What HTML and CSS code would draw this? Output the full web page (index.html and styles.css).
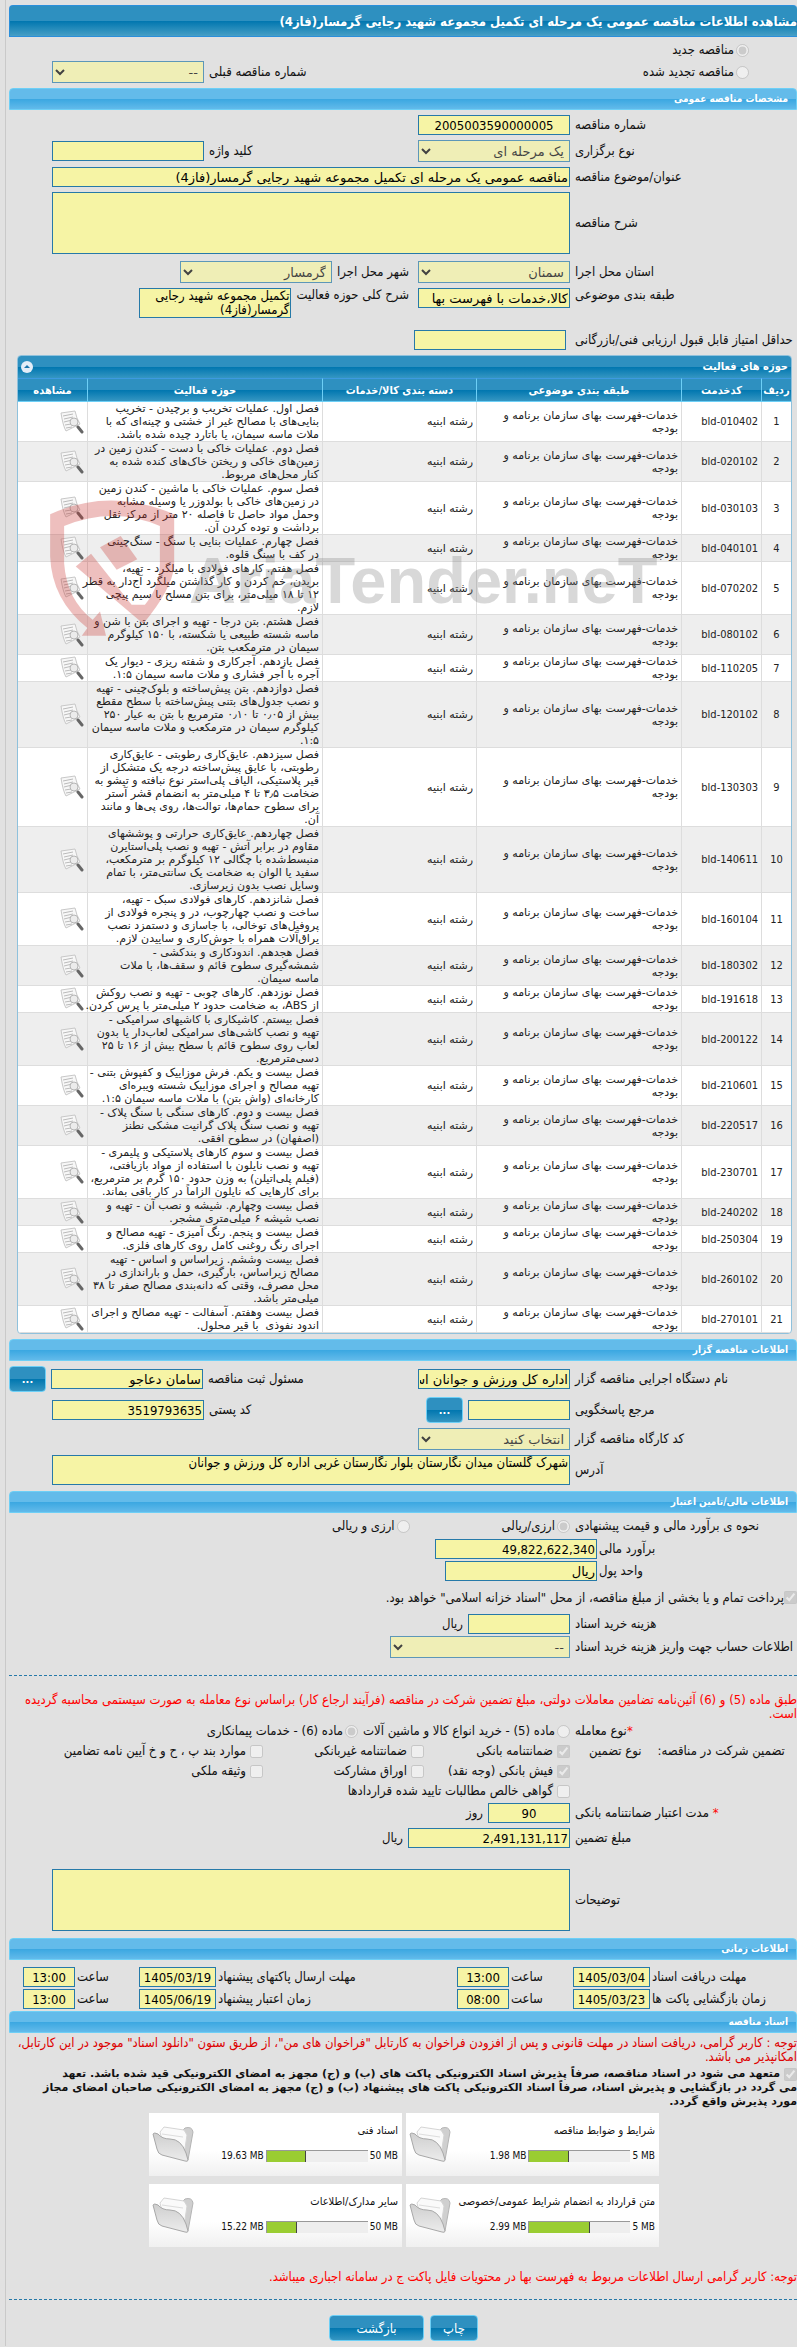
FILE: index.html
```html
<!DOCTYPE html>
<html lang="fa" dir="rtl">
<head>
    <meta charset="UTF-8">
    <meta name="viewport" content="width=device-width, initial-scale=1">
    <title>مشاهده اطلاعات مناقصه عمومی</title>
    <link rel="stylesheet" href="styles.css">
</head>
<body>
    <!-- Shared icons -->
    <svg class="sprite" aria-hidden="true">
        <defs>
            <linearGradient id="folder-face" x1="0" y1="0" x2="0" y2="1">
                <stop offset="0" stop-color="#cfcfcf"/>
                <stop offset="1" stop-color="#ececec"/>
            </linearGradient>
        </defs>
        <symbol id="icon-view" viewBox="0 0 24 24">
            <path d="M1 3 L15 1 L17 8 L20 14 L6 21 Q3 16 1 3 Z" fill="#f7f7f7" stroke="#c8c8c8"/>
            <path d="M3 6 L13 4 M4 9 L13 7 M4 12 L12 10 M5 15 L11 14 M6 18 L12 17" stroke="#bbb" fill="none"/>
            <circle cx="14" cy="12" r="4" fill="#ececec" stroke="#b5b5b5"/>
            <path d="M18 17 L22 22" stroke="#666" stroke-width="3" stroke-linecap="round"/>
        </symbol>
        <symbol id="icon-folder" viewBox="0 0 42 38">
            <path d="M28 8 L33 3 Q40 1 41 7 L36 35 L30 30 Z" fill="#cfcfcf" stroke="#b5b5b5"/>
            <path d="M8 7 L12 2 L32 5 L35 10 L32 30 L12 24 Z" fill="#fafafa" stroke="#d5d5d5"/>
            <path d="M10 9 L31 12" stroke="#ddd"/>
            <path d="M1 9 Q2 7 6 9 Q10 14 18 14 Q29 14 34 28 L36 35 Q36 37 33 36 L10 30 Q6 29 5 24 Z" fill="url(#folder-face)" stroke="#a8a8a8"/>
        </symbol>
    </svg>

    <main class="page">
        <h1 class="title-bar">مشاهده اطلاعات مناقصه عمومی یک مرحله ای تکمیل مجموعه شهید رجایی گرمسار(فاز4)</h1>

        <form>
            <div class="kind">
                <label class="kind-option"><input type="radio" name="kind" checked disabled>مناقصه جدید</label>
                <div class="row">
                    <label class="kind-option"><input type="radio" name="kind" disabled>مناقصه تجدید شده</label>
                    <div class="pair at-end">
                        <label for="prev">شماره مناقصه قبلی</label>
                        <select id="prev" disabled><option>--</option></select>
                    </div>
                </div>
            </div>

            <h2 class="section-bar">مشخصات مناقصه عمومی</h2>
            <div class="rows first">
                <div class="row">
                    <label class="caption" for="number">شماره مناقصه</label>
                    <input class="num center" id="number" type="text" value="2005003590000005" readonly>
                </div>
                <div class="row">
                    <label class="caption" for="type">نوع برگزاری</label>
                    <select id="type" disabled><option>یک مرحله ای</option></select>
                    <div class="pair at-end">
                        <label for="keyword">کلید واژه</label>
                        <input id="keyword" type="text" readonly>
                    </div>
                </div>
                <div class="row">
                    <label class="caption" for="subject">عنوان/موضوع مناقصه</label>
                    <input class="wide" id="subject" type="text" value="مناقصه عمومی یک مرحله ای تکمیل مجموعه شهید رجایی گرمسار(فاز4)" readonly>
                </div>
                <div class="row">
                    <label class="caption" for="desc">شرح مناقصه</label>
                    <textarea class="wide tall" id="desc" readonly></textarea>
                </div>
                <div class="row place">
                    <label class="caption" for="province">استان محل اجرا</label>
                    <select id="province" disabled><option>سمنان</option></select>
                    <div class="pair">
                        <label for="city">شهر محل اجرا</label>
                        <select id="city" disabled><option>گرمسار</option></select>
                    </div>
                </div>
                <div class="row top">
                    <label class="caption" for="category">طبقه بندی موضوعی</label>
                    <input id="category" type="text" value="کالا،خدمات با فهرست بها" readonly>
                    <div class="pair">
                        <label for="scope">شرح کلی حوزه فعالیت</label>
                        <textarea id="scope" readonly>تکمیل مجموعه شهید رجایی گرمسار(فاز4)</textarea>
                    </div>
                </div>
                <div class="row score">
                    <label class="caption" for="score">حداقل امتیاز قابل قبول ارزیابی فنی/بازرگانی</label>
                    <input id="score" type="text" readonly>
                </div>
            </div>

            <section class="grid-box">
                <div class="grid-title">
                    <h2>حوزه های فعالیت</h2>
                    <button class="toggle" type="button" aria-label="جمع کردن">
                        <svg viewBox="0 0 12 12"><path d="M3 7 L6 4 L9 7 Z"/></svg>
                    </button>
                </div>
                <table>
                    <colgroup>
                        <col class="col-index"><col class="col-code"><col class="col-category">
                        <col class="col-group"><col class="col-scope"><col class="col-view">
                    </colgroup>
                    <thead>
                        <tr>
                            <th>ردیف</th>
                            <th>کدخدمت</th>
                            <th>طبقه بندی موضوعی</th>
                            <th>دسته بندی کالا/خدمات</th>
                            <th>حوزه فعالیت</th>
                            <th>مشاهده</th>
                        </tr>
                    </thead>
                    <tbody id="activities"></tbody>
                </table>
                <div class="watermark" aria-hidden="true">
                    <svg viewBox="0 0 375 412">
                        <path d="M0 43 Q180 -40 373 43 V200 Q365 270 280 372 L77 200 L123 162 L245 315 L285 315 Q330 260 330 190 V78 Q190 18 42 78 V190 Q50 300 128 360 L150 335 L168 408 H95 L112 385 Q5 300 0 170 Z"/>
                        <path d="M150 142 L212 108 L262 178 L200 210 Z"/>
                    </svg>
                    <span>AriaTender.neT</span>
                </div>
            </section>

            <h2 class="section-bar">اطلاعات مناقصه گزار</h2>
            <div class="rows">
                <div class="row">
                    <label class="caption" for="org">نام دستگاه اجرایی مناقصه گزار</label>
                    <input id="org" type="text" value="اداره کل ورزش و جوانان استان سمنان" readonly>
                    <div class="pair at-edge">
                        <label for="registrar">مسئول ثبت مناقصه</label>
                        <input id="registrar" type="text" value="سامان دعاجو" readonly>
                        <button class="btn dots" type="button">...</button>
                    </div>
                </div>
                <div class="row">
                    <label class="caption" for="contact">مرجع پاسخگویی</label>
                    <input class="short" id="contact" type="text" readonly>
                    <button class="btn dots" type="button">...</button>
                    <div class="pair at-end">
                        <label for="postal">کد پستی</label>
                        <input class="num" id="postal" type="text" value="3519793635" readonly>
                    </div>
                </div>
                <div class="row">
                    <label class="caption" for="workshop">کد کارگاه مناقصه گزار</label>
                    <select id="workshop" disabled><option>انتخاب کنید</option></select>
                </div>
                <div class="row">
                    <label class="caption" for="address">آدرس</label>
                    <textarea class="wide" id="address" readonly>شهرک گلستان میدان نگارستان بلوار نگارستان غربی اداره کل ورزش و جوانان</textarea>
                </div>
            </div>

            <h2 class="section-bar">اطلاعات مالی/تامین اعتبار</h2>
            <div class="finance">
                <div class="row line">
                    <span class="caption">نحوه ی برآورد مالی و قیمت پیشنهادی</span>
                    <label class="choice"><input type="radio" name="currency" checked disabled>ارزی/ریالی</label>
                    <label class="choice far"><input type="radio" name="currency" disabled>ارزی و ریالی</label>
                </div>
                <div class="row money">
                    <label class="caption" for="estimate">برآورد مالی</label>
                    <input class="num amount" id="estimate" type="text" value="49,822,622,340" readonly>
                </div>
                <div class="row money">
                    <label class="caption" for="unit">واحد پول</label>
                    <input id="unit" type="text" value="ریال" readonly>
                </div>
                <label class="check-line"><input type="checkbox" checked disabled>پرداخت تمام و یا بخشی از مبلغ مناقصه، از محل "اسناد خزانه اسلامی" خواهد بود.</label>
                <div class="row">
                    <label class="caption" for="cost">هزینه خرید اسناد</label>
                    <input class="short" id="cost" type="text" readonly>
                    <span>ریال</span>
                </div>
                <div class="row">
                    <label class="caption" for="account">اطلاعات حساب جهت واریز هزینه خرید اسناد</label>
                    <select class="account" id="account" disabled><option>--</option></select>
                </div>
            </div>

            <div class="guarantee">
                <p class="notice">طبق ماده (5) و (6) آئین‌نامه تضامین معاملات دولتی، مبلغ تضمین شرکت در مناقصه (فرآیند ارجاع کار) براساس نوع معامله به صورت سیستمی محاسبه گردیده<br>است.</p>
                <div class="row line">
                    <span class="caption"><span class="star">*</span>نوع معامله</span>
                    <label class="choice"><input type="radio" name="deal" disabled>ماده (5) - خرید انواع کالا و ماشین آلات</label>
                    <label class="choice"><input type="radio" name="deal" checked disabled>ماده (6) - خدمات پیمانکاری</label>
                </div>
                <div class="row top">
                    <div class="caption kinds-caption">
                        <span>تضمین شرکت در مناقصه:</span>
                        <span>نوع تضمین</span>
                    </div>
                    <div class="kinds">
                        <label><input type="checkbox" checked disabled>ضمانتنامه بانکی</label>
                        <label><input type="checkbox" disabled>ضمانتنامه غیربانکی</label>
                        <label><input type="checkbox" disabled>موارد بند پ ، ح و خ آیین نامه تضامین</label>
                        <label><input type="checkbox" checked disabled>فیش بانکی (وجه نقد)</label>
                        <label><input type="checkbox" disabled>اوراق مشارکت</label>
                        <label><input type="checkbox" disabled>وثیقه ملکی</label>
                        <label class="full"><input type="checkbox" disabled>گواهی خالص مطالبات تایید شده قراردادها</label>
                    </div>
                </div>
                <div class="rows">
                    <div class="row">
                        <label class="caption" for="days"><span class="star">*</span> مدت اعتبار ضمانتنامه بانکی</label>
                        <input class="num days center" id="days" type="text" value="90" readonly>
                        <span>روز</span>
                    </div>
                    <div class="row">
                        <label class="caption" for="deposit">مبلغ تضمین</label>
                        <input class="num amount" id="deposit" type="text" value="2,491,131,117" readonly>
                        <span>ریال</span>
                    </div>
                    <div class="row remarks">
                        <label class="caption" for="remarks">توضیحات</label>
                        <textarea class="wide tall" id="remarks" readonly></textarea>
                    </div>
                </div>
            </div>

            <h2 class="section-bar">اطلاعات زمانی</h2>
            <div class="times">
                <label for="d1">مهلت دریافت اسناد</label>
                <input class="num" id="d1" type="text" value="1405/03/04" readonly>
                <label for="t1">ساعت</label>
                <input class="num" id="t1" type="text" value="13:00" readonly>
                <label for="d2">مهلت ارسال پاکتهای پیشنهاد</label>
                <input class="num" id="d2" type="text" value="1405/03/19" readonly>
                <label for="t2">ساعت</label>
                <input class="num" id="t2" type="text" value="13:00" readonly>
                <label for="d3">زمان بازگشایی پاکت ها</label>
                <input class="num" id="d3" type="text" value="1405/03/23" readonly>
                <label for="t3">ساعت</label>
                <input class="num" id="t3" type="text" value="08:00" readonly>
                <label for="d4">زمان اعتبار پیشنهاد</label>
                <input class="num" id="d4" type="text" value="1405/06/19" readonly>
                <label for="t4">ساعت</label>
                <input class="num" id="t4" type="text" value="13:00" readonly>
            </div>

            <h2 class="section-bar">اسناد مناقصه</h2>
            <p class="notice dark">توجه : کاربر گرامی، دریافت اسناد در مهلت قانونی و پس از افزودن فراخوان به کارتابل "فراخوان های من"، از طریق ستون "دانلود اسناد" موجود در این کارتابل،<br>امکانپذیر می باشد.</p>
            <label class="pledge"><input type="checkbox" checked disabled> متعهد می شود در اسناد مناقصه، صرفاً پذیرش اسناد الکترونیکی پاکت های (ب) و (ج) مجهز به امضای الکترونیکی قید شده باشد. تعهد<br>می گردد در بازگشایی و پذیرش اسناد، صرفاً اسناد الکترونیکی پاکت های پیشنهاد (ب) و (ج) مجهز به امضای الکترونیکی صاحبان امضای مجاز<br>مورد پذیرش واقع گردد.</label>

            <div class="cards" id="cards"></div>

            <p class="notice last">توجه: کاربر گرامی ارسال اطلاعات مربوط به فهرست بها در محتویات فایل پاکت ج در سامانه اجباری میباشد.</p>
            <div class="actions">
                <button class="btn" type="button">چاپ</button>
                <button class="btn back" type="button">بازگشت</button>
            </div>
        </form>
    </main>

    <script>
        const activities = [
            ['bld-010402', 'فصل اول. عملیات تخریب و برچیدن - تخریب|بنایی‌های با مصالح غیر از خشتی و چینه‌ای که با|ملات ماسه سیمان، یا باتارد چیده شده باشد.'],
            ['bld-020102', 'فصل دوم. عملیات خاکی با دست - کندن زمین در|زمین‌های خاکی و ریختن خاک‌های کنده شده به|کنار محل‌های مربوط.'],
            ['bld-030103', 'فصل سوم. عملیات خاکی با ماشین - کندن زمین|در زمین‌های خاکی با بولدوزر یا وسیله مشابه|وحمل مواد حاصل تا فاصله ۲۰ متر از مرکز ثقل|برداشت و توده کردن آن.'],
            ['bld-040101', 'فصل چهارم. عملیات بنایی با سنگ - سنگ‌چینی|در کف با سنگ قلوه.'],
            ['bld-070202', 'فصل هفتم. کارهای فولادی با میلگرد - تهیه،|بریدن، خم کردن و کار گذاشتن میلگرد آج‌دار به قطر|۱۲ تا ۱۸ میلی‌متر، برای بتن مسلح با سیم پیچی|لازم.'],
            ['bld-080102', 'فصل هشتم. بتن درجا - تهیه و اجرای بتن با شن و|ماسه شسته طبیعی یا شکسته، با ۱۵۰ کیلوگرم|سیمان در مترمکعب بتن.'],
            ['bld-110205', 'فصل یازدهم. آجرکاری و شفته ریزی - دیوار یک|آجره با آجر فشاری و ملات ماسه سیمان ۱:۵.'],
            ['bld-120102', 'فصل دوازدهم. بتن پیش‌ساخته و بلوک‌چینی - تهیه|و نصب جدول‌های بتنی پیش‌ساخته با سطح مقطع|بیش از ۰٫۰۵ تا ۰٫۱۰ مترمربع با بتن به عیار ۲۵۰|کیلوگرم سیمان در مترمکعب و ملات ماسه سیمان|۱:۵.'],
            ['bld-130303', 'فصل سیزدهم. عایق‌کاری رطوبتی - عایق‌کاری|رطوبتی، با عایق پیش‌ساخته درجه یک متشکل از|قیر پلاستیکی، الیاف پلی‌استر نوع نبافته و تیشو به|ضخامت ۳٫۵ تا ۴ میلی‌متر به انضمام قشر آستر|برای سطوح حمام‌ها، توالت‌ها، روی پی‌ها و مانند|آن.'],
            ['bld-140611', 'فصل چهاردهم. عایق‌کاری حرارتی و پوششهای|مقاوم در برابر آتش - تهیه و نصب پلی‌استایرن|منبسط‌شده با چگالی ۱۲ کیلوگرم بر مترمکعب،|سفید یا الوان به ضخامت یک سانتی‌متر، با تمام|وسایل نصب بدون زیرسازی.'],
            ['bld-160104', 'فصل شانزدهم. کارهای فولادی سبک - تهیه،|ساخت و نصب چهارچوب، در و پنجره فولادی از|پروفیل‌های توخالی، با جاسازی و دستمزد نصب|یراق‌آلات همراه با جوش‌کاری و ساییدن لازم.'],
            ['bld-180302', 'فصل هجدهم. اندودکاری و بندکشی -|شمشه‌گیری سطوح قائم و سقف‌ها، با ملات|ماسه سیمان.'],
            ['bld-191618', 'فصل نوزدهم. کارهای چوبی - تهیه و نصب روکش|از ABS، به ضخامت حدود ۲ میلی‌متر با پرس کردن.'],
            ['bld-200122', 'فصل بیستم. کاشیکاری با کاشیهای سرامیکی -|تهیه و نصب کاشی‌های سرامیکی لعاب‌دار یا بدون|لعاب روی سطوح قائم با سطح بیش از ۱۶ تا ۲۵|دسی‌مترمربع.'],
            ['bld-210601', 'فصل بیست و یکم. فرش موزاییک و کفپوش بتنی -|تهیه مصالح و اجرای موزاییک شسته ویبره‌ای|کارخانه‌ای (واش بتن) با ملات ماسه سیمان ۱:۵.'],
            ['bld-220517', 'فصل بیست و دوم. کارهای سنگی با سنگ پلاک -|تهیه و نصب سنگ پلاک گرانیت مشکی نطنز|(اصفهان) در سطوح افقی.'],
            ['bld-230701', 'فصل بیست و سوم کارهای پلاستیکی و پلیمری -|تهیه و نصب نایلون با استفاده از مواد بازیافتی،|(فیلم پلی‌اتیلن) به وزن حدود ۱۵۰ گرم بر مترمربع،|برای کارهایی که نایلون الزاماً در کار باقی بماند.'],
            ['bld-240202', 'فصل بیست وچهارم. شیشه و نصب آن - تهیه و|نصب شیشه ۶ میلی‌متری مشجر.'],
            ['bld-250304', 'فصل بیست و پنجم. رنگ آمیزی - تهیه مصالح و|اجرای رنگ روغنی کامل روی کارهای فلزی.'],
            ['bld-260102', 'فصل بیست وششم. زیراساس و اساس - تهیه|مصالح زیراساس، بارگیری، حمل و باراندازی در|محل مصرف، وقتی که دانه‌بندی مصالح صفر تا ۳۸|میلی‌متر باشد.'],
            ['bld-270101', 'فصل بیست وهفتم. آسفالت - تهیه مصالح و اجرای|اندود نفوذی &nbsp;با قیر محلول.']
        ];

        const files = [
            { title: 'شرایط و ضوابط مناقصه', used: 1.98, limit: 5 },
            { title: 'اسناد فنی', used: 19.63, limit: 50 },
            { title: 'متن قرارداد به انضمام شرایط عمومی/خصوصی', used: 2.99, limit: 5 },
            { title: 'سایر مدارک/اطلاعات', used: 15.22, limit: 50 }
        ];

        document.getElementById('activities').innerHTML = activities.map((item, i) => `
            <tr>
                <td class="index">${i + 1}</td>
                <td><bdi>${item[0]}</bdi></td>
                <td>خدمات-فهرست بهای سازمان برنامه و<br>بودجه</td>
                <td>رشته ابنیه</td>
                <td>${item[1].split('|').join('<br>')}</td>
                <td><a href="#" aria-label="مشاهده"><svg class="view"><use href="#icon-view"/></svg></a></td>
            </tr>`).join('');

        document.getElementById('cards').innerHTML = files.map(file => `
            <div class="card">
                <div class="card-text">
                    <div>${file.title}</div>
                    <div class="usage">
                        <bdi>${file.limit} MB</bdi>
                        <div class="meter"><div class="meter-fill" style="width: ${file.used / file.limit * 100}%"></div></div>
                        <bdi>${file.used} MB</bdi>
                    </div>
                </div>
                <svg class="folder"><use href="#icon-folder"/></svg>
            </div>`).join('');
    </script>
</body>
</html>
```
FILE: styles.css
```css
* {
    box-sizing: border-box;
}

body {
    margin: 0;
    background: #e1e1e1;
    color: #111;
    font-family: Tahoma, "DejaVu Sans Condensed", "DejaVu Sans", sans-serif;
    font-size: 13px;
    line-height: 14px;
    overflow-x: hidden;
}

h1, h2, p {
    margin: 0;
}

.sprite {
    position: absolute;
    width: 0;
    height: 0;
}

.page {
    margin-left: 5px;
    padding: 5px 0 5px 3px;
    border-left: 1px solid #c9c9c9;
}

/* Bars */
.title-bar {
    height: 32px;
    line-height: 32px;
    border: 1px solid #2b8fdb;
    border-right: 0;
    border-radius: 4px 4px 0 0;
    background: linear-gradient(#2e90c0 50%, #0076af 50%, #479fc6);
    color: #fff;
    font-size: 13px;
    white-space: nowrap;
}

.section-bar {
    height: 22px;
    line-height: 20px;
    padding-right: 8px;
    border: 1px solid #6dcff6;
    border-radius: 4px 4px 0 0;
    background: linear-gradient(#63bbea 50%, #3aa7e1 50%, #62baea);
    color: #fff;
    font-size: 10px;
}

/* Controls */
input, select, textarea, button {
    font-family: inherit;
    margin: 0;
}

input[type="text"], select, textarea {
    width: 152px;
    height: 20px;
    padding: 0 1px;
    border: 1px solid #2679a8;
    border-radius: 0;
    background-color: #f6f4a5;
    color: #000;
    font-family: Tahoma, "DejaVu Sans", sans-serif;
    font-size: 13px;
    flex: none;
}

input.num[type="text"], textarea {
    font-family: Tahoma, "DejaVu Sans Condensed", sans-serif;
}

select {
    height: 22px;
    opacity: 0.7;
}

select:disabled {
    color: #000;
}

textarea {
    display: block;
    height: 30px;
    line-height: 14px;
    resize: none;
    overflow: hidden;
}

input[type="radio"], input[type="checkbox"] {
    width: 13px;
    height: 13px;
    flex: none;
}

input.wide[type="text"], textarea.wide {
    flex: 1;
    margin-left: 43px;
}

textarea.tall {
    height: 62px;
}

input.short[type="text"] {
    width: 102px;
}

input.amount[type="text"] {
    width: 162px;
}

input.days[type="text"] {
    width: 82px;
}

select.account {
    width: 180px;
}

.center {
    text-align: center;
}

.btn {
    height: 26px;
    padding: 0;
    border: 1px solid #6dcff6;
    border-radius: 4px;
    background: linear-gradient(#2e90c0 50%, #0076af 50%, #3596c2);
    color: #fff;
    font-size: 13px;
    width: 48px;
}

.btn.dots {
    width: 37px;
    font-size: 11px;
    font-weight: bold;
}

.btn.back {
    width: 95px;
}

/* Form rows */
.rows {
    display: flex;
    flex-direction: column;
    gap: 5px;
    padding: 5px 0 6px;
}

.rows.first {
    padding-bottom: 5px;
}

.row {
    display: flex;
    align-items: center;
    gap: 5px;
    white-space: nowrap;
}

.row.top {
    align-items: flex-start;
}

.caption {
    width: 222px;
    flex: none;
    text-align: left;
}

.pair {
    display: flex;
    align-items: center;
    gap: 5px;
    margin-right: 4px;
}

.row.top .pair {
    align-items: flex-start;
}

.pair.at-end {
    margin-right: auto;
    margin-left: 43px;
}

.pair.at-edge {
    margin-right: auto;
}

.kind {
    display: flex;
    flex-direction: column;
    padding: 2px 48px 5px 0;
}

.kind-option {
    display: flex;
    align-items: center;
    gap: 2px;
    height: 22px;
}

.place {
    margin-top: 2px;
}

.score {
    margin-top: 7px;
}

.score input {
    margin-right: 4px;
}

/* Activity table */
.grid-box {
    position: relative;
    margin: 0 5px 5px 8px;
    border: 1px solid #8fc1dc;
    border-radius: 4px;
    background: #fff;
    overflow: hidden;
}

.grid-title {
    display: flex;
    align-items: center;
    justify-content: space-between;
    height: 22px;
    padding: 0 3px;
    background: linear-gradient(#2e90c0 50%, #0076af 50%, #3596c2);
    color: #fff;
}

.grid-title h2 {
    font-size: 11px;
}

.toggle {
    width: 12px;
    height: 12px;
    padding: 0;
    border: 0;
    border-radius: 50%;
    background: #e3edf8;
}

.toggle svg {
    display: block;
    fill: #1a74ab;
}

table {
    width: 100%;
    table-layout: fixed;
    border-collapse: separate;
    border-spacing: 0;
    font-size: 11px;
    line-height: 13px;
    color: #222;
    white-space: nowrap;
}

.col-index { width: 30px; }
.col-code { width: 80px; }
.col-category { width: 205px; }
.col-group { width: 154px; }
.col-view { width: 69px; }

th {
    height: 24px;
    padding: 0 1px;
    border-top: 1px solid #3d9ae0;
    border-bottom: 1px solid #6dcff6;
    border-left: 1px solid #6dcff6;
    background: linear-gradient(#2e90c0 50%, #0076af 50%, #3596c2);
    color: #fff;
    font-size: 11px;
}

td {
    padding: 0 3px;
    border-bottom: 1px solid #ddd;
    border-left: 1px solid #ddd;
    font-family: Tahoma, "DejaVu Sans", sans-serif;
    vertical-align: middle;
}

th:last-child, td:last-child {
    border-left: 0;
}

td bdi, td.index {
    font-family: Tahoma, "DejaVu Sans Condensed", sans-serif;
}

td.index {
    text-align: center;
}

tbody tr:nth-child(even) {
    background: #eee;
}

.view {
    display: block;
    width: 24px;
    height: 24px;
}

.watermark {
    position: absolute;
    top: 144px;
    left: 32px;
    display: flex;
    align-items: flex-end;
    gap: 14px;
    direction: ltr;
    pointer-events: none;
    color: #808080;
    opacity: 0.3;
    font-family: "Liberation Sans", sans-serif;
    font-size: 65px;
    font-weight: bold;
    line-height: 112px;
}

.watermark svg {
    width: 125px;
    height: 137px;
    fill: #c9302c;
}

/* Finance */
.finance {
    padding: 2px 0 17px;
    border-bottom: 1px dashed #2679a8;
    display: flex;
    flex-direction: column;
    gap: 2px;
}

.row.line {
    height: 20px;
}

.finance .line {
    height: 22px;
}

.choice {
    display: flex;
    align-items: center;
    gap: 2px;
}

.choice.far {
    margin-right: 87px;
}

.money {
    gap: 2px;
}

.money .caption {
    width: 198px;
}

.check-line {
    display: flex;
    align-items: center;
    height: 29px;
}

/* Guarantee */
.notice {
    color: #f00;
    white-space: nowrap;
}

.guarantee > .notice {
    margin-top: 17px;
}

.notice.dark {
    color: #d00;
    margin-top: 3px;
}

.star {
    color: #f00;
}

.kinds-caption {
    display: flex;
    justify-content: flex-end;
    gap: 16px;
    padding-left: 14px;
    line-height: 20px;
}

.kinds {
    flex: 1;
    display: grid;
    grid-template-columns: 141px 156px 1fr;
    column-gap: 5px;
}

.kinds label {
    display: flex;
    align-items: center;
    gap: 4px;
    height: 20px;
}

.kinds .full {
    grid-column: 1 / -1;
}

.guarantee .rows {
    padding: 2px 0 7px;
}

.remarks {
    margin-top: 16px;
}

/* Times */
.times {
    display: grid;
    grid-template-columns: 145px 77px 60px 52px 1fr 77px 60px 52px;
    gap: 2px;
    align-items: center;
    padding: 7px 0 2px 14px;
}

.times label {
    text-align: left;
}

.times input[type="text"] {
    width: 100%;
    text-align: center;
}

/* Documents */
.pledge {
    display: block;
    margin-top: 3px;
    font-family: Tahoma, "DejaVu Sans", sans-serif;
    font-size: 11px;
    font-weight: bold;
    white-space: nowrap;
}

.pledge input {
    vertical-align: middle;
}

.cards {
    display: grid;
    grid-template-columns: 253px 253px;
    gap: 8px 4px;
    padding-right: 138px;
    margin-top: 4px;
}

.card {
    display: flex;
    justify-content: space-between;
    height: 63px;
    padding: 12px 4px 0 3px;
    background: linear-gradient(#fff 60%, #f0f0f0);
    font-size: 11px;
    line-height: 12px;
    white-space: nowrap;
}

.usage {
    display: flex;
    align-items: center;
    gap: 2px;
    margin-top: 13px;
    font-size: 10px;
}

.meter {
    direction: ltr;
    width: 102px;
    height: 12px;
    border-top: 1px solid #999;
    border-left: 1px solid #999;
    background: #eee;
}

.meter-fill {
    height: 11px;
    border-right: 1px solid #444;
    background: #9acd32;
}

.folder {
    width: 42px;
    height: 38px;
    flex: none;
}

.notice.last {
    padding: 23px 0 15px;
    border-bottom: 1px dashed #2679a8;
}

.actions {
    display: flex;
    gap: 6px;
    padding: 15px 319px 0 0;
}
```
